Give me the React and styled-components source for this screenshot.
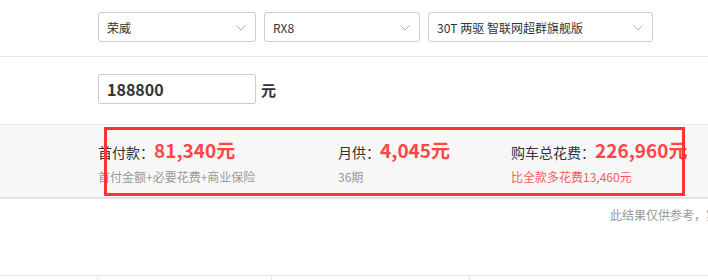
import React from "react";
import styled, { createGlobalStyle } from "styled-components";

const GlobalStyle = createGlobalStyle`
  html, body {
    margin: 0;
    padding: 0;
    background: #fff;
    overflow: hidden;
  }
  body {
    font-family: "Noto Sans CJK SC", "Noto Sans", sans-serif;
    color: #333;
  }
`;

const Page = styled.div`
  width: 708px;
`;

const SelectRow = styled.div`
  display: flex;
  gap: 8px;
  padding: 12px 0 14px 98px;
  border-bottom: 1px solid #e5e5e5;
`;

const SelectBox = styled.div`
  box-sizing: border-box;
  width: ${(p) => p.$w}px;
  height: 30px;
  border: 1px solid #ccc;
  border-radius: 3px;
  display: flex;
  align-items: center;
  justify-content: space-between;
  padding: 0 9px 0 8px;
  font-size: 12px;
  color: #333;
  background: #fff;
`;

const Chevron = () => (
  <svg width="10" height="6" viewBox="0 0 10 6" style={{ marginTop: 2 }}>
    <path d="M0.5 0.5 L5 5 L9.5 0.5" fill="none" stroke="#b3b3b3" strokeWidth="1" />
  </svg>
);

const PriceRow = styled.div`
  display: flex;
  align-items: center;
  gap: 5px;
  padding: 17px 0 20px 98px;
`;

const PriceInput = styled.input`
  box-sizing: border-box;
  width: 158px;
  height: 30px;
  border: 1px solid #ccc;
  border-radius: 2px;
  padding: 0 8px;
  font-family: inherit;
  font-size: 16px;
  font-weight: 700;
  color: #333;
  outline: none;
`;

const Unit = styled.span`
  font-size: 15px;
  font-weight: 700;
  color: #333;
`;

const Band = styled.div`
  position: relative;
  display: grid;
  grid-template-columns: 240px 173px auto;
  background: #f7f7f7;
  border-top: 1px solid #e6e6e6;
  border-bottom: 2px solid #e4e4e4;
  padding: 13px 0 11px 98px;
`;

const Highlight = styled.div`
  position: absolute;
  left: 104px;
  top: 2px;
  width: 581px;
  height: 69px;
  box-sizing: border-box;
  border: 3px solid #f33;
  pointer-events: none;
`;

const Item = styled.div`
  display: flex;
  flex-direction: column;
  gap: 6px;
`;

const MainLine = styled.div`
  display: flex;
  align-items: baseline;
  height: 24px;
  line-height: 24px;
  font-size: 14px;
  color: #333;
  white-space: nowrap;
`;

const Amount = styled.span`
  font-size: 19px;
  font-weight: 700;
  color: #ff4646;
`;

const SubLine = styled.div`
  font-size: 12px;
  line-height: 18px;
  color: ${(p) => (p.$red ? "#ff5c5c" : "#999")};
  white-space: nowrap;
`;

const NoteRow = styled.div`
  box-sizing: border-box;
  height: 76px;
  padding: 8px 0 0 610px;
  font-size: 12px;
  line-height: 16px;
  color: #999;
  white-space: nowrap;
  overflow: hidden;
`;

const Table = styled.div`
  display: grid;
  grid-template-columns: 98px 174px 198px 1fr;
  border-top: 1px solid #e5e5e5;
`;

const Cell = styled.div`
  height: 4px;
  border-right: ${(p) => (p.$last ? "none" : "1px solid #e5e5e5")};
`;

const results = [
  { label: "首付款", amount: "81,340元", sub: "首付金额+必要花费+商业保险" },
  { label: "月供", amount: "4,045元", sub: "36期" },
  { label: "购车总花费", amount: "226,960元", sub: "比全款多花费13,460元", red: true },
];

export default function App() {
  return (
    <Page>
      <GlobalStyle />
      <SelectRow>
        <SelectBox $w={158}>
          <span>荣威</span>
          <Chevron />
        </SelectBox>
        <SelectBox $w={156}>
          <span>RX8</span>
          <Chevron />
        </SelectBox>
        <SelectBox $w={225}>
          <span>30T 两驱 智联网超群旗舰版</span>
          <Chevron />
        </SelectBox>
      </SelectRow>
      <PriceRow>
        <PriceInput defaultValue="188800" />
        <Unit>元</Unit>
      </PriceRow>
      <Band>
        {results.map((r) => (
          <Item key={r.label}>
            <MainLine>
              {r.label}：<Amount>{r.amount}</Amount>
            </MainLine>
            <SubLine $red={r.red}>{r.sub}</SubLine>
          </Item>
        ))}
        <Highlight />
      </Band>
      <NoteRow>此结果仅供参考，实际应缴费用以当地为准</NoteRow>
      <Table>
        <Cell />
        <Cell />
        <Cell />
        <Cell $last />
      </Table>
    </Page>
  );
}
